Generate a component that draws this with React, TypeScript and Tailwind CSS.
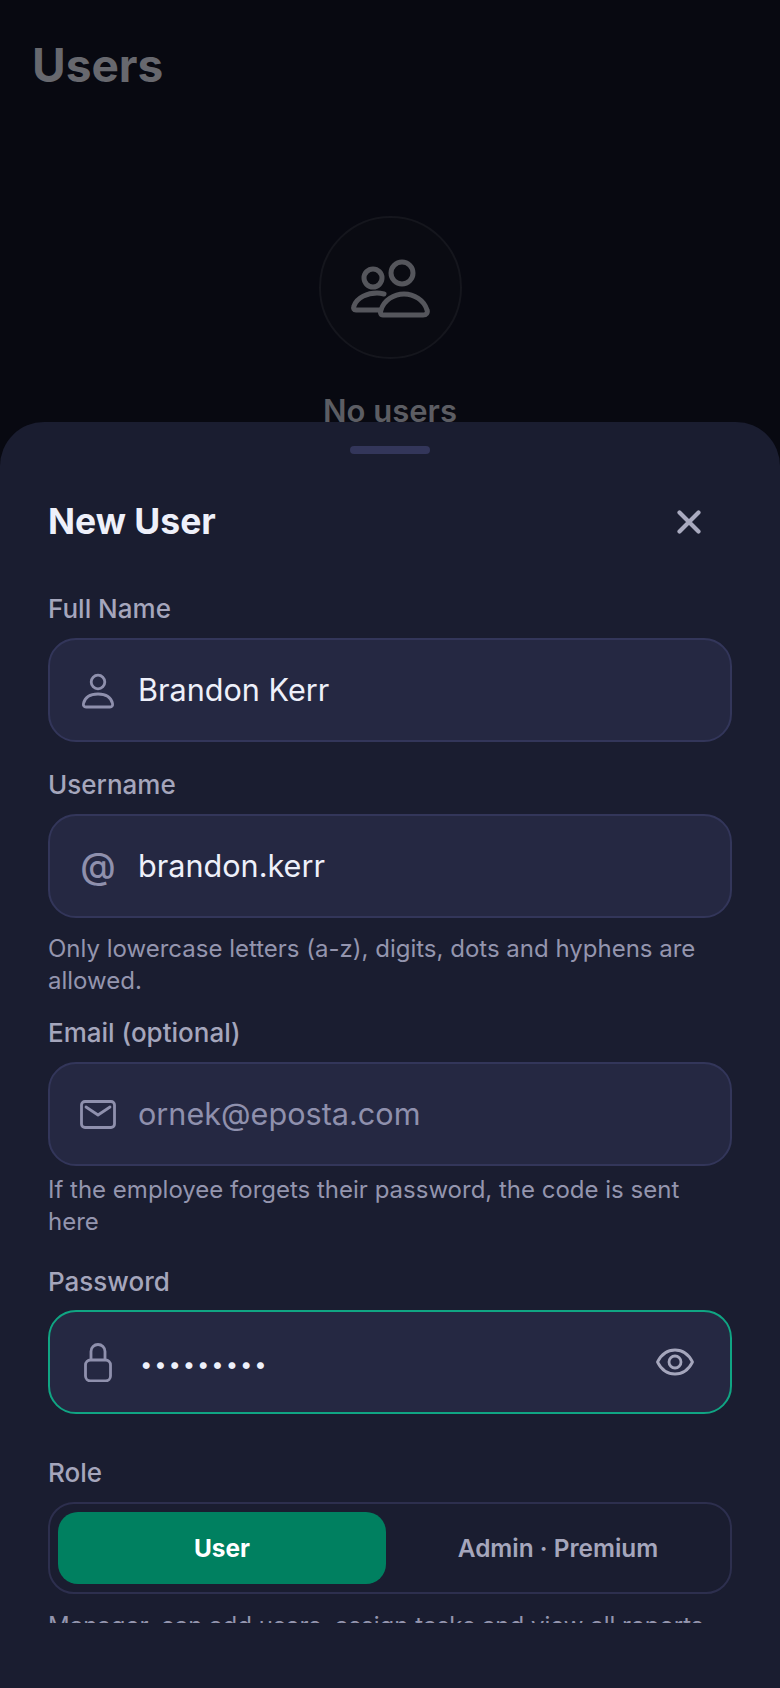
import type { ReactNode } from "react";

const ICON = "w-10 h-10 flex-shrink-0 fill-none stroke-current";

function UsersIcon() {
  return (
    <svg viewBox="0 0 80 80" className="w-20 h-20 fill-none stroke-current text-[#55565c]" strokeWidth={5} strokeLinecap="round" strokeLinejoin="round">
      <circle cx="52" cy="25" r="11" />
      <circle cx="23" cy="30" r="9" />
      <path d="M33 67 H73 C76.5 67 78 64.5 77 62 C74 52 64 46 54 46 C44 46 34 52 31 62 C30 64.5 30.5 67 33 67Z" />
      <path d="M34 46 C32 45.5 30 45 27 45 C18 45 7 49 4 58 C3 60.5 4 62 6 62 H29" />
    </svg>
  );
}

function UserIcon() {
  return (
    <svg viewBox="0 0 40 40" className={ICON} strokeWidth={2.8} strokeLinejoin="round">
      <circle cx="20" cy="12" r="6.8" />
      <path d="M8 37 H32 C34 37 35 35.5 34.5 33.5 C33 27 27 24 20 24 C13 24 7 27 5.5 33.5 C5 35.5 6 37 8 37Z" />
    </svg>
  );
}

function MailIcon() {
  return (
    <svg viewBox="0 0 40 40" className={ICON} strokeWidth={2.8} strokeLinecap="round" strokeLinejoin="round">
      <rect x="3.5" y="7.5" width="33" height="26" rx="3.5" />
      <path d="M8 13 L20 21 L32 13" />
    </svg>
  );
}

function LockIcon() {
  return (
    <svg viewBox="0 0 40 40" className={ICON} strokeWidth={2.8} strokeLinejoin="round">
      <rect x="7.5" y="18" width="25" height="21" rx="5" />
      <path d="M13 18 V9.5 a7 7 0 0 1 14 0 V18" />
    </svg>
  );
}

function EyeIcon() {
  return (
    <svg viewBox="0 0 40 40" className={ICON} strokeWidth={2.8} strokeLinejoin="round">
      <path d="M2.5 20 C7 11 14 8 20 8 C26 8 33 11 37.5 20 C33 29 26 32 20 32 C14 32 7 29 2.5 20Z" />
      <circle cx="20" cy="20" r="6" />
    </svg>
  );
}

function Field({
  icon,
  focused,
  children,
  right,
  className = "mt-[13px]",
}: {
  icon: ReactNode;
  focused?: boolean;
  children: ReactNode;
  right?: ReactNode;
  className?: string;
}) {
  return (
    <div
      className={`flex h-[104px] items-center rounded-[28px] border-2 bg-[#252842] pl-[28px] pr-[35px] ${className} ${
        focused ? "border-[#10a583]" : "border-[#33365a]"
      }`}
    >
      <span className="text-[#8f90ad]">{icon}</span>
      <div className="ml-[20px] min-w-0 flex-1 text-[30.6px] leading-[40px]">{children}</div>
      {right}
    </div>
  );
}

function Label({ children, className = "" }: { children: ReactNode; className?: string }) {
  return <p className={`text-[26px] font-medium leading-[32px] text-[#a5a6bc] ${className}`}>{children}</p>;
}

function Hint({ children, className = "" }: { children: ReactNode; className?: string }) {
  return <p className={`text-[24px] leading-[32px] text-[#9495ae] ${className}`}>{children}</p>;
}

export default function App() {
  return (
    <div className="relative h-[1688px] w-[780px] overflow-hidden bg-[#080911] font-['Inter',sans-serif]">
      <h1 className="px-8 pt-[37px] text-[46px] font-bold leading-[56px] text-[#67686e]">Users</h1>

      <div className="mt-[123px] flex flex-col items-center">
        <div className="flex h-[143px] w-[143px] items-center justify-center rounded-full border-2 border-[#15161d] bg-[#0a0b12]">
          <UsersIcon />
        </div>
        <p className="mt-[32px] text-[31px] font-semibold leading-[40px] text-[#5c5d63]">No users</p>
      </div>

      <div className="absolute inset-x-0 bottom-0 h-[1266px] rounded-t-[44px] bg-[#1a1d30]">
        <div className="h-[1201px] overflow-hidden px-12">
          <div className="mx-auto mt-6 h-2 w-20 rounded-full bg-[#33365a]" />

          <div className="mt-[46px] flex h-11 items-center justify-between">
            <h2 className="text-[35.5px] font-bold leading-[44px] text-[#eef0fa]">New User</h2>
            <svg viewBox="0 0 24 24" className="mr-[31px] h-6 w-6 fill-none stroke-[#a9aabf]" strokeWidth={4.2} strokeLinecap="round">
              <path d="M2.5 2.5 L21.5 21.5 M21.5 2.5 L2.5 21.5" />
            </svg>
          </div>

          <Label className="mt-[49px]">Full Name</Label>
          <Field icon={<UserIcon />}>
            <span className="text-[#eef0fa]">Brandon Kerr</span>
          </Field>

          <Label className="mt-[27px]">Username</Label>
          <Field icon={<span className="flex h-10 w-10 items-center justify-center text-[36px] font-medium leading-none">@</span>}>
            <span className="text-[#eef0fa]">brandon.kerr</span>
          </Field>
          <Hint className="mt-[15px]">Only lowercase letters (a-z), digits, dots and hyphens are allowed.</Hint>

          <Label className="mt-[20px]">Email (optional)</Label>
          <Field icon={<MailIcon />}>
            <span className="text-[#8f90ad]">ornek@eposta.com</span>
          </Field>
          <Hint className="mt-[8px]">If the employee forgets their password, the code is sent here</Hint>

          <Label className="mt-[28px]">Password</Label>
          <Field
            focused
            className="mt-[12px]"
            icon={<LockIcon />}
            right={
              <span className="text-[#a5a6bc]">
                <EyeIcon />
              </span>
            }
          >
            <span className="ml-[2px] text-[22px] tracking-[1.9px] text-[#eef0fa]">•••••••••</span>
          </Field>

          <Label className="mt-[43px]">Role</Label>
          <div className="mt-[13px] grid h-[92px] grid-cols-2 gap-2 rounded-[26px] border-2 border-[#2d2f4e] p-2">
            <div className="flex items-center justify-center rounded-[20px] bg-[#008060] text-[24.4px] font-bold text-white">User</div>
            <div className="flex items-center justify-center text-[24.4px] font-semibold text-[#a5a6bc]">Admin · Premium</div>
          </div>
          <Hint className="mt-[16px]">Manager, can add users, assign tasks and view all reports</Hint>
        </div>
      </div>
    </div>
  );
}
